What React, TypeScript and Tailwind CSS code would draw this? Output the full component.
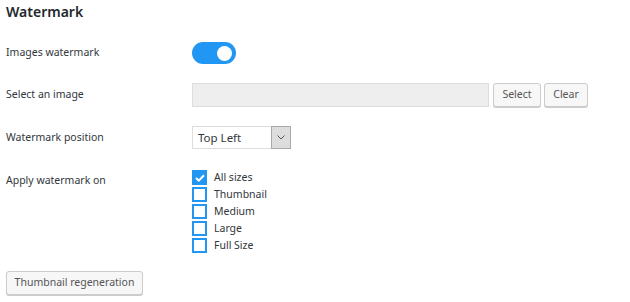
export default function App() {
  const sizes = [
    { label: "All sizes", checked: true },
    { label: "Thumbnail", checked: false },
    { label: "Medium", checked: false },
    { label: "Large", checked: false },
    { label: "Full Size", checked: false },
  ];

  return (
    <div
      className="w-[630px] h-[302px] bg-white px-[6px] text-[#32373c] overflow-hidden"
      style={{ fontFamily: '"Noto Sans", "Open Sans", sans-serif' }}
    >
      <h2 className="pt-[2px] text-[14px] leading-[20px] font-semibold text-[#23282d]">Watermark</h2>

      <div className="mt-[20px] flex items-center h-[22px]">
        <div className="w-[186px] text-[10.5px]">Images watermark</div>
        <div className="w-[44px] h-[22px] rounded-full bg-[#2196f3] flex items-center justify-end pr-[4px]">
          <div className="w-[15px] h-[15px] rounded-full bg-white" />
        </div>
      </div>

      <div className="mt-[19px] flex items-center h-[24px]">
        <div className="w-[186px] text-[10.5px]">Select an image</div>
        <div className="w-[297px] h-[24px] bg-[#eeeeee] border border-[#dddddd]" />
        <button className="ml-[4px] w-[48px] h-[24px] rounded-[3px] border border-[#cccccc] bg-[#f7f7f7] shadow-[0_1px_0_#cccccc] text-[10.5px] text-[#555555]">
          Select
        </button>
        <button className="ml-[3px] w-[44px] h-[24px] rounded-[3px] border border-[#cccccc] bg-[#f7f7f7] shadow-[0_1px_0_#cccccc] text-[10.5px] text-[#555555]">
          Clear
        </button>
      </div>

      <div className="mt-[19px] flex items-center h-[23px]">
        <div className="w-[186px] text-[10.5px]">Watermark position</div>
        <div className="w-[99px] h-[23px] flex border border-[#dddddd] bg-white">
          <div className="flex-1 flex items-center pl-[5px] text-[11.5px] text-[#32373c]">Top Left</div>
          <div className="w-[18px] h-full bg-[#dddddd] border-l border-[#aaaaaa] border-y border-r flex items-center justify-center -my-px -mr-px box-content">
            <svg width="8" height="5" viewBox="0 0 8 5" fill="none">
              <path d="M0.5 0.5 L4 4 L7.5 0.5" stroke="#555" strokeWidth="1" />
            </svg>
          </div>
        </div>
      </div>

      <div className="mt-[21px] flex">
        <div className="w-[186px] text-[10.5px] leading-[15px] pt-[3px]">Apply watermark on</div>
        <div className="flex flex-col gap-[2px]">
          {sizes.map((s) => (
            <div key={s.label} className="flex items-center h-[15px]">
              {s.checked ? (
                <div className="w-[15px] h-[15px] bg-[#2196f3] flex items-center justify-center">
                  <svg width="10" height="8" viewBox="0 0 10 8" fill="none">
                    <path d="M1 4 L3.8 6.6 L9 1.2" stroke="white" strokeWidth="2" />
                  </svg>
                </div>
              ) : (
                <div className="w-[15px] h-[15px] border-2 border-[#2196f3] bg-white" />
              )}
              <span className="ml-[7px] text-[10.5px]">{s.label}</span>
            </div>
          ))}
        </div>
      </div>

      <button className="mt-[18px] w-[137px] h-[24px] rounded-[3px] border border-[#cccccc] bg-[#f7f7f7] shadow-[0_1px_0_#cccccc] text-[10.5px] text-[#555555]">
        Thumbnail regeneration
      </button>
    </div>
  );
}
